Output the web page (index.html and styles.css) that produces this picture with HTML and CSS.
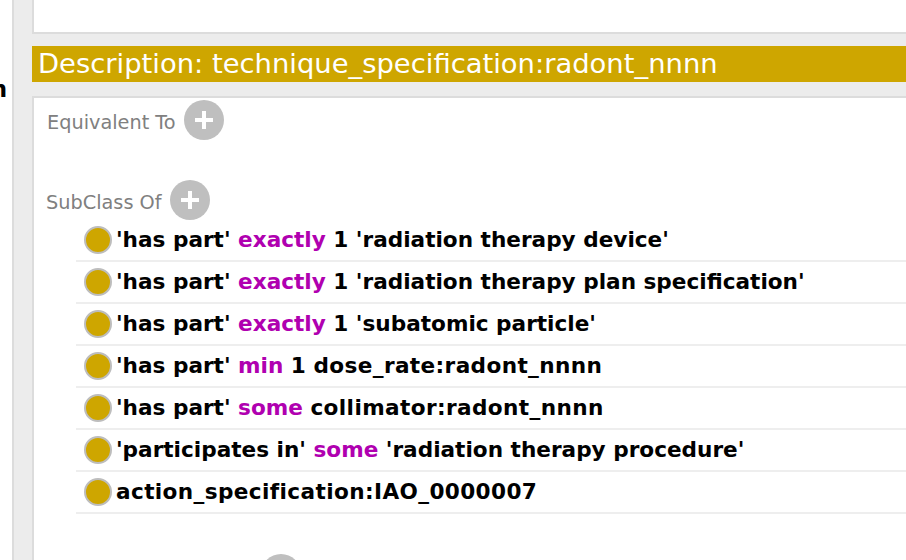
FILE: index.html
```html
<!DOCTYPE html>
<html lang="en">
<head>
  <meta charset="UTF-8">
  <title>Description</title>
  <link rel="stylesheet" href="styles.css">
</head>
<body>
  <div class="page">
    <div class="side"><span class="side-text">n</span></div>
    <div class="main">
      <div class="top-panel"></div>
      <h2 class="title-bar">Description: technique_specification:radont_nnnn</h2>
      <div class="panel">

        <div class="section section-first">
          <span class="section-label label-equiv">Equivalent To</span>
          <span class="add-btn"><svg viewBox="0 0 40 40" width="40" height="40"><path d="M20 11v18M11 20h18" class="plus"/></svg></span>
        </div>

        <div class="section section-sub">
          <span class="section-label">SubClass Of</span>
          <span class="add-btn"><svg viewBox="0 0 40 40" width="40" height="40"><path d="M20 11v18M11 20h18" class="plus"/></svg></span>
        </div>

        <ul class="axioms">
          <li><span class="dot"></span><span class="axiom">'has part' <b>exactly</b> 1 'radiation therapy device'</span></li>
          <li><span class="dot"></span><span class="axiom">'has part' <b>exactly</b> 1 'radiation therapy plan specification'</span></li>
          <li><span class="dot"></span><span class="axiom">'has part' <b>exactly</b> 1 'subatomic particle'</span></li>
          <li><span class="dot"></span><span class="axiom">'has part' <b>min</b> 1 <span class="name">dose_rate:radont_nnnn</span></span></li>
          <li><span class="dot"></span><span class="axiom">'has part' <b>some</b> <span class="name">collimator:radont_nnnn</span></span></li>
          <li><span class="dot"></span><span class="axiom">'participates in' <b>some</b> 'radiation therapy procedure'</span></li>
          <li><span class="dot"></span><span class="axiom name">action_specification:IAO_0000007</span></li>
        </ul>

        <div class="section section-next">
          <span class="add-btn"><svg viewBox="0 0 40 40" width="40" height="40"><path d="M20 11v18M11 20h18" class="plus"/></svg></span>
        </div>

      </div>
    </div>
  </div>
</body>
</html>
```

FILE: styles.css
```css
html, body {
  margin: 0;
  height: 100%;
  overflow: hidden;
  background-color: #ffffff;
}

body {
  font-family: "DejaVu Sans", sans-serif;
}

.page {
  display: flex;
  height: 560px;
}

.side {
  width: 12px;
  overflow: hidden;
  display: flex;
  justify-content: flex-end;
  padding-top: 75px;
  box-sizing: border-box;
}

.side-text {
  font-size: 23px;
  font-weight: bold;
  line-height: 28px;
  color: #000000;
  margin-right: 5px;
}

.main {
  flex: 1;
  min-width: 0;
  background-color: #ececec;
  border-left: 2px solid #dcdcdc;
  padding-left: 18px;
}

.top-panel {
  height: 32px;
  background-color: #ffffff;
  border-left: 2px solid #dcdcdc;
  border-bottom: 2px solid #dcdcdc;
}

.title-bar {
  margin: 12px 0 14px;
  height: 36px;
  padding-left: 6px;
  background-color: #cea600;
  color: #ffffff;
  font-size: 27.4px;
  font-weight: normal;
  line-height: 36px;
  white-space: nowrap;
}

.panel {
  height: 464px;
  box-sizing: border-box;
  background-color: #ffffff;
  border-left: 2px solid #dcdcdc;
  border-top: 2px solid #dcdcdc;
  overflow: hidden;
}

.section {
  display: flex;
  align-items: center;
  gap: 8px;
  padding-left: 12px;
  height: 40px;
}

.section-first {
  margin-top: 2px;
}

.section-sub {
  margin-top: 40px;
}

.section-next {
  margin-top: 40px;
  padding-left: 227px;
}

.section-label {
  padding-top: 4px;
  color: #808080;
  font-size: 19.3px;
  white-space: nowrap;
}

.label-equiv {
  margin-left: 1px;
}

.add-btn {
  display: block;
  width: 40px;
  height: 40px;
  border-radius: 50%;
  background-color: #bfbfbf;
}

.add-btn svg {
  display: block;
}

.plus {
  stroke: #ffffff;
  stroke-width: 4;
  fill: none;
}

.axioms {
  list-style: none;
  margin: 0 0 0 42px;
  padding: 0;
}

.axioms li {
  display: flex;
  align-items: center;
  gap: 4px;
  height: 42px;
  box-sizing: border-box;
  padding-left: 8px;
  border-bottom: 2px solid #eeeeee;
  color: #000000;
  font-size: 21.6px;
  font-weight: bold;
  white-space: nowrap;
}

.axiom {
  padding-bottom: 2px;
}

.axioms b {
  color: #b000b0;
}

.name {
  letter-spacing: 0.38px;
}

.dot {
  flex: none;
  width: 28px;
  height: 28px;
  box-sizing: border-box;
  border-radius: 50%;
  background-color: #cea600;
  border: 2px solid #bdbdbd;
}
```
